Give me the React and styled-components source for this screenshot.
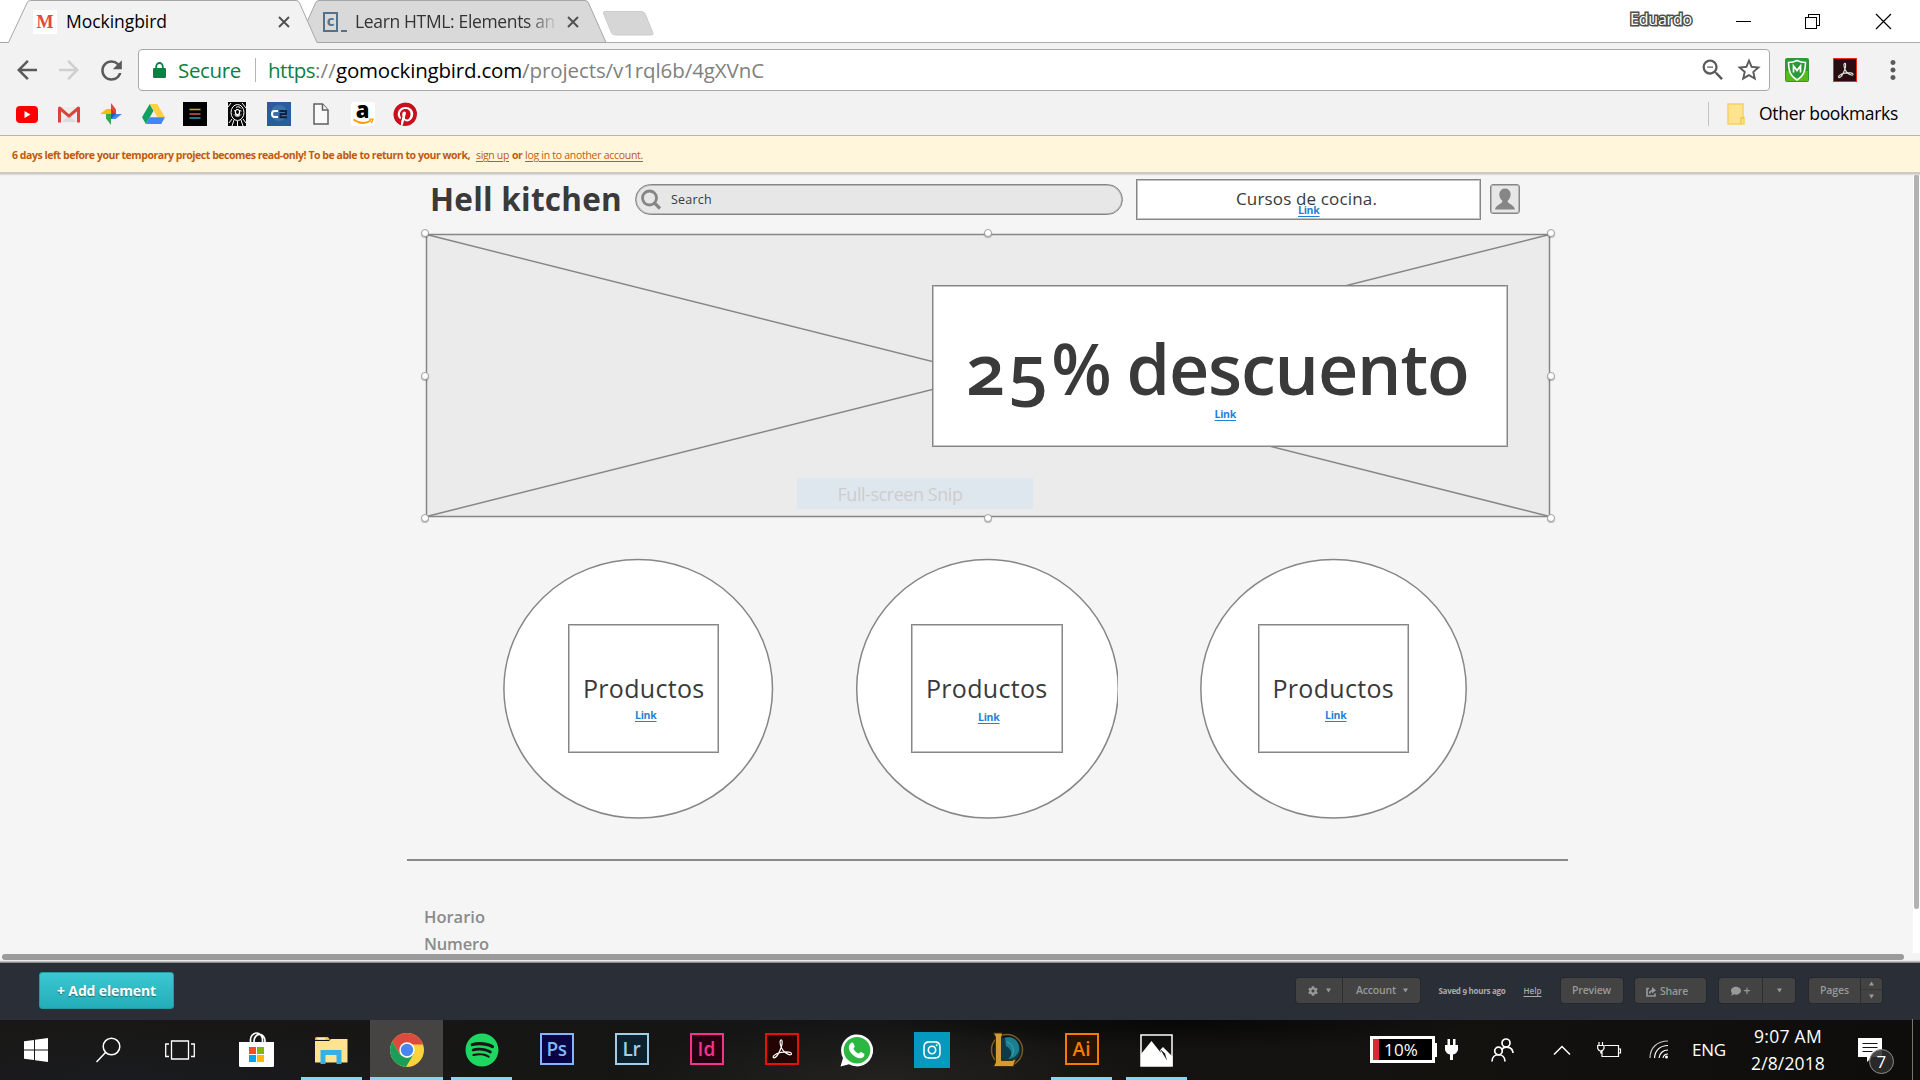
import React, { useLayoutEffect, useRef, useState } from 'react';
import styled, { createGlobalStyle, css } from 'styled-components';
import { MdArrowBack, MdArrowForward, MdRefresh, MdZoomOut, MdStarBorder, MdMoreVert } from 'react-icons/md';
import { FaSpotify, FaPinterest, FaInstagram, FaCog, FaComment } from 'react-icons/fa';

const ui = `'Open Sans', 'Noto Sans', sans-serif`;
const mock = `'Open Sans', 'Noto Sans', sans-serif`;

const Global = createGlobalStyle`
  * { box-sizing: border-box; }
  html, body { margin: 0; padding: 0; overflow: hidden; background: #fff; }
  body { font-family: ${ui}; }
  svg { display: block; flex: none; }
`;

/* ---------- text ---------- */

const Label = styled.span`
  display: inline-block;
  flex: none;
  white-space: pre;
  line-height: 1;
  font-family: ${(p) => p.$font || ui};
  font-size: ${(p) => p.$size}px;
  font-weight: ${(p) => p.$weight || 400};
  color: ${(p) => p.$color || '#000'};
  text-decoration: ${(p) => (p.$underline ? 'underline' : 'none')};
  text-underline-offset: 2px;
  font-variant-numeric: ${(p) => (p.$oldstyle ? 'oldstyle-nums' : 'normal')};
`;

/* Tracks its letters so that the run is exactly `width` wide. */
function Text({ width, children, className, ...rest }) {
  const ref = useRef(null);
  const [spacing, setSpacing] = useState(0);
  useLayoutEffect(() => {
    const natural = ref.current.getBoundingClientRect().width;
    setSpacing((width - natural) / ref.current.textContent.length);
  }, [width]);
  return (
    <Label ref={ref} className={className} style={{ letterSpacing: `${spacing}px` }} {...rest}>
      {children}
    </Label>
  );
}

/* ---------- browser chrome ---------- */

const Screen = styled.div`
  width: 1920px;
  height: 1080px;
  display: flex;
  flex-direction: column;
  overflow: hidden;
  background: #fff;
`;

const TabStrip = styled.header`
  position: relative;
  height: 43px;
  display: flex;
  align-items: center;
  background: #fff;
  flex: none;
`;

const TabShapes = styled.svg`
  position: absolute;
  left: 0;
  top: 0;
`;

const Tab = styled.div`
  position: relative;
  display: flex;
  align-items: center;
  height: 43px;
  width: ${(p) => p.$width}px;
  padding-left: ${(p) => p.$pad}px;
`;

const Favicon = styled.span`
  width: 24px;
  height: 24px;
  margin-right: 9px;
  display: flex;
  align-items: center;
  justify-content: center;
  background: #fff;
  font: 700 18px/1 'Liberation Serif', serif;
  color: #e2483d;
`;

const CodeFavicon = styled.span`
  display: flex;
  align-items: flex-end;
  width: 32px;
  gap: 3px;
`;

const CodeBox = styled.span`
  width: 15px;
  height: 20px;
  border: 2px solid #557089;
  font: 700 15px/13px 'Open Sans', sans-serif;
  text-align: center;
  color: #557089;
`;

const CodeDash = styled.span`
  width: 6px;
  height: 2px;
  background: #557089;
`;

const FadeTitle = styled.div`
  overflow: hidden;
  width: 199px;
  height: 26px;
  display: flex;
  align-items: center;
  mask-image: linear-gradient(90deg, #000 86%, rgba(0, 0, 0, 0.15) 100%);
`;

const TabClose = styled.svg`
  position: relative;
  margin-left: ${(p) => p.$gap}px;
`;

const WindowArea = styled.div`
  margin-left: auto;
  display: flex;
  align-items: center;
  height: 42px;
  position: relative;
`;

const UserName = styled.div`
  margin: -5px 44px 0 0;
  -webkit-text-stroke: 3px #4c4c4c;
  paint-order: stroke fill;
`;

const Toolbar = styled.div`
  height: 54px;
  flex: none;
  display: flex;
  align-items: center;
  padding: 0 0 0 6px;
  background: #f2f2f2;
`;

const Slot = styled.span`
  width: ${(p) => p.$w || 42}px;
  flex: none;
  display: flex;
  align-items: center;
  justify-content: center;
  color: ${(p) => p.$color || '#5a5a5a'};
`;

const Omnibox = styled.div`
  margin: 0 3px 0 6px;
  width: 1632px;
  height: 42px;
  border: 1px solid #a9a9a9;
  border-radius: 4px;
  background: #fff;
  display: flex;
  align-items: center;
  padding-left: 10px;
`;

const OmniDivider = styled.i`
  width: 1px;
  height: 24px;
  margin: 0 12px 0 14px;
  background: #b5b5b5;
`;

const OmniActions = styled.div`
  margin-left: auto;
  display: flex;
  align-items: center;
  gap: 8px;
  padding-right: 6px;
  color: #5a5a5a;
`;

const Bookmarks = styled.div`
  height: 39px;
  flex: none;
  display: flex;
  align-items: center;
  padding: 0 22px 4px 6px;
  background: #f2f2f2;
  border-bottom: 1px solid #b4b4b4;
`;

const OtherBookmarks = styled.div`
  margin-left: auto;
  height: 24px;
  border-left: 1px solid #c3c3c3;
  padding-left: 18px;
  display: flex;
  align-items: center;
  gap: 14px;
`;

const Chip = styled.span`
  width: 24px;
  height: 24px;
  border-radius: ${(p) => p.$radius || 0}px;
  background: ${(p) => p.$bg};
  display: flex;
  align-items: center;
  justify-content: center;
  overflow: hidden;
`;

/* ---------- notice ---------- */

const Notice = styled.div`
  position: relative;
  z-index: 2;
  height: 38px;
  flex: none;
  display: flex;
  align-items: center;
  padding: 2px 0 0 12px;
  background: #fff6db;
  border-bottom: 2px solid #cbcbc3;
  box-shadow: 0 1px 1px #dcdcdc;
`;

const NoticeGap = styled.i`
  width: ${(p) => p.$w}px;
`;

/* ---------- mockup canvas ---------- */

const Workspace = styled.main`
  height: 789px;
  flex: none;
  display: grid;
  grid-template: 779px 10px / 1913px 7px;
  background: #fff;
`;

const Canvas = styled.section`
  position: relative;
  overflow: hidden;
  background: #f5f5f5;
`;

const VTrack = styled.div`
  padding: 0 1px;
`;
const VThumb = styled.div`
  height: 735px;
  border-radius: 3px;
  background: #b2b2b2;
`;
const HTrack = styled.div`
  grid-column: 1 / 3;
  padding: 1px 16px 0 2px;
  background: linear-gradient(#f4f4f4 0 7px, #ececec 7px 8px, #8b908e 9px);
`;
const HThumb = styled.div`
  height: 6px;
  border-radius: 3px;
  background: #9b9b9b;
`;

const place = css`
  position: absolute;
  left: ${(p) => p.$x}px;
  top: ${(p) => p.$y - 174}px;
`;

const Box = styled.div`
  ${place}
  width: ${(p) => p.$w}px;
  height: ${(p) => p.$h}px;
  background: ${(p) => p.$fill || '#fff'};
  border: ${(p) => (p.$bare ? 'none' : '1px solid #868686')};
  box-shadow: ${(p) => (p.$bare ? 'none' : 'inset 0 0 0 1px rgba(134, 134, 134, 0.5)')};
  border-radius: ${(p) => p.$radius || 0}px;
`;

const Shapes = styled.svg`
  position: absolute;
  left: 0;
  top: 0;
`;

const PlacedText = styled.div`
  ${place}
  margin-top: ${(p) => -0.888 * p.$s}px;
  line-height: 1;
  font-size: ${(p) => p.$s}px;
  display: flex;
`;

const Rule = styled.hr`
  ${place}
  width: 1161px;
  height: 2px;
  margin: 0;
  border: 0;
  background: #888;
`;

const Handle = styled.i`
  ${place}
  width: 8px;
  height: 8px;
  margin: -4px 0 0 -4.5px;
  border-radius: 50%;
  background: #fff;
  border: 1px solid #a3a3a3;
  box-shadow: 0 1px 1px rgba(0, 0, 0, 0.25);
`;

function MockText({ x, baseline, width, size, children, ...rest }) {
  return (
    <PlacedText $x={x} $y={baseline} $s={size}>
      <Text width={width} $size={size} $font={mock} $color="#3a3a3a" {...rest}>{children}</Text>
    </PlacedText>
  );
}

function MockLink({ x, baseline }) {
  return (
    <MockText x={x} baseline={baseline} width={21.5} size={10.5} $weight={700} $color="#1f83d8" $underline>Link</MockText>
  );
}

/* ---------- editor bar ---------- */

const EditorBar = styled.footer`
  height: 57px;
  flex: none;
  display: flex;
  align-items: flex-start;
  padding: 9px 38px 0 39px;
  background: #2a2f37;
`;

const AddButton = styled.button`
  width: 135px;
  height: 37px;
  padding: 0;
  border: 1px solid #259aa5;
  border-radius: 3px;
  background: linear-gradient(#3bc8d1, #23adb8);
  display: flex;
  align-items: center;
  justify-content: center;
  text-shadow: 0 1px 1px rgba(0, 0, 0, 0.4);
`;

const EditorTools = styled.div`
  margin: 6px 0 0 auto;
  display: flex;
  align-items: center;
  height: 25px;
`;

const ButtonGroup = styled.div`
  display: flex;
  height: 25px;
  margin-left: ${(p) => p.$gap || 0}px;
  border-radius: 3px;
  background: #434343;
  box-shadow: 0 0 0 1px #25282d;
  overflow: hidden;
`;

const GroupButton = styled.div`
  width: ${(p) => p.$w}px;
  padding-top: ${(p) => p.$drop || 0}px;
  display: flex;
  align-items: center;
  justify-content: center;
  gap: ${(p) => p.$gap || 0}px;
  color: #999;
  & + & { border-left: 1px solid #2b2d30; }
`;

const Stepper = styled.div`
  width: 22px;
  border-left: 1px solid #2b2d30;
  display: grid;
  grid-template-rows: 12px 13px;
  place-items: center;
  & > :first-child { border-bottom: 1px solid #363636; }
`;

const StepCell = styled.span`
  width: 100%;
  height: 100%;
  display: flex;
  align-items: center;
  justify-content: center;
`;

const Saved = styled.div`
  display: flex;
  gap: 18px;
  margin: 0 19px 0 18px;
`;

/* ---------- taskbar ---------- */

const Taskbar = styled.nav`
  height: 60px;
  flex: none;
  display: flex;
  background:
    radial-gradient(ellipse 260px 60px at 880px 60px, #232221, transparent),
    radial-gradient(ellipse 380px 50px at 130px 55px, #1a1b1e, transparent),
    radial-gradient(ellipse 300px 30px at 1180px 0, #070707, transparent),
    linear-gradient(90deg, #191816, #141414 45%, #14120f 75%, #0e0d0b);
`;

const TaskCell = styled.div`
  width: ${(p) => p.$w || 75}px;
  margin-left: ${(p) => p.$gap || 0}px;
  height: 60px;
  display: flex;
  flex-direction: column;
  align-items: center;
`;

const TaskFace = styled.span`
  width: ${(p) => (p.$active ? '73px' : '100%')};
  height: 57px;
  flex: none;
  padding-top: 3px;
  display: flex;
  align-items: center;
  justify-content: center;
  background: ${(p) => (p.$active ? '#454442' : 'transparent')};
`;

const TaskLine = styled.i`
  width: ${(p) => (p.$active ? 73 : 61)}px;
  height: 3px;
  background: #76dcf8;
`;

const AppTile = styled.span`
  width: 34px;
  height: 32px;
  border: 2px solid ${(p) => p.$line};
  background: ${(p) => p.$bg};
  display: flex;
  align-items: center;
  justify-content: center;
  margin-top: -2px;
`;

const SmallTile = styled.span`
  width: 24px;
  height: 24px;
  border: 1px solid #f32a12;
  background: #2a0d10;
  display: flex;
  align-items: center;
  justify-content: center;
`;

const InstaTile = styled.span`
  width: 36px;
  height: 36px;
  background: #0599bf;
  color: #fff;
  display: flex;
  align-items: center;
  justify-content: center;
`;

const Tray = styled.div`
  margin-left: auto;
  display: flex;
  align-items: center;
  width: 550px;
  padding-bottom: 1px;
`;

const Battery = styled.div`
  width: 65px;
  height: 27px;
  border: 3px solid #fff;
  background: linear-gradient(90deg, #d92b35 6px, #000 6px);
  padding-left: 11px;
  display: flex;
  align-items: center;
`;

const BatteryTip = styled.i`
  width: 2px;
  height: 14px;
  background: #fff;
  margin-right: 8px;
`;

const Space = styled.i`
  width: ${(p) => p.$w}px;
  flex: none;
`;

const Clock = styled.div`
  width: 74px;
  display: flex;
  flex-direction: column;
  align-items: center;
  gap: 10px;
  padding-top: 1px;
`;

const ShowDesktop = styled.i`
  width: 8px;
  height: 61px;
  border-left: 1px solid #77766f;
  margin-left: auto;
`;

const Count = styled.div`
  position: relative;
  width: 38px;
  height: 37px;
  margin-top: 14px;
`;

const CountBadge = styled.span`
  position: absolute;
  left: 11px;
  top: 11px;
  width: 25px;
  height: 25px;
  border-radius: 50%;
  border: 1px solid #8c8c8c;
  background: rgba(45, 45, 45, 0.88);
  display: flex;
  align-items: center;
  justify-content: center;
`;

/* ---------- drawings ---------- */

const Close = ({ gap }) => (
  <TabClose $gap={gap} width="12" height="12" viewBox="0 0 12 12" stroke="#505050" strokeWidth="1.9">
    <path d="M1 1 L11 11 M11 1 L1 11" />
  </TabClose>
);

const Down = ({ up }) => (
  <svg width="5" height="5" viewBox="0 0 5 5"><path d={up ? 'M0 4.5H5L2.5 .5Z' : 'M0 .5H5L2.5 4.5Z'} fill="#999" /></svg>
);

const Lock = () => (
  <svg width="13" height="16" viewBox="0 0 13 16"><path d="M3.200 7V4.500a3.300 3.500 0 0 1 6.600 0V7" fill="none" stroke="#0b8043" strokeWidth="1.800" /><rect y="6" width="13" height="10" rx="1.200" fill="#0b8043" /></svg>
);

const AcrobatMark = ({ size, color, weight = 1.5 }) => (
  <svg width={size} height={size} viewBox="0 0 24 24" fill="none" stroke={color} strokeWidth={weight}>
    <path d="M10.600 3.200c1.800-1.200 2.100 2.400.7 6.800C9.700 15 6.400 21 4 20.900 1.500 20.500 4.500 16.500 11 15.400c6-1 10.800-.4 10.500 1.500-.4 2-5.300.5-8.300-3.300C10.600 10.200 9.200 4.500 10.600 3.200Z" />
  </svg>
);

const Youtube = () => (
  <svg width="22" height="17" viewBox="0 0 22 17"><rect width="22" height="17" rx="4" fill="#f00" /><path d="M8.500 5v7l6-3.500z" fill="#fff" /></svg>
);
const Gmail = () => (
  <svg width="22" height="17" viewBox="0 0 22 17">
    <rect x="1" y="1" width="20" height="15.500" rx="1" fill="#ececec" />
    <path d="M4 16 L11 9 18 16Z" fill="#dcdcdc" />
    <path d="M1.500 16.500V2L11 10.200 20.500 2v14.500" fill="none" stroke="#d8453a" strokeWidth="3" strokeLinejoin="round" />
  </svg>
);
const Photos = () => (
  <svg width="22" height="22" viewBox="0 0 22 22">
    <path d="M11 0v11H16V6.500Z" fill="#e2453a" />
    <path d="M22 11H11v5h4.500Z" fill="#4286f4" />
    <path d="M11 22V11H6v4.500Z" fill="#35a853" />
    <path d="M0 11h11V6H6.500Z" fill="#fbbc05" />
    <path d="M11 11V16L16 11Z" fill="#1e5dc4" /><path d="M11 11V6l5 5Z" fill="#b3261e" opacity=".5" />
  </svg>
);
const Drive = () => (
  <svg width="23" height="20" viewBox="0 0 23 20">
    <path d="M7.700 0 0 13.300 3.800 20 11.600 6.700Z" fill="#11a15e" />
    <path d="M7.700 0h7.600L23 13.300h-7.600Z" fill="#ffcf44" />
    <path d="M7.600 13.300H23L19.200 20H3.800Z" fill="#4285f4" />
  </svg>
);
const Stripes = () => (
  <svg width="24" height="24"><rect width="24" height="24" fill="#000" /><path d="M6.500 7.500h11" stroke="#b6a82c" strokeWidth="1.600" /><path d="M6.500 12h11" stroke="#c94f4a" strokeWidth="1.600" /><path d="M6.500 16h11" stroke="#1d96ad" strokeWidth="1.600" /></svg>
);
const Print = () => (
  <svg width="24" height="24" viewBox="-1 0 24 24">
    <rect x="2" width="18" height="24" fill="#080808" />
    <g fill="none" stroke="#fff" strokeWidth="1">
      <ellipse cx="11.500" cy="10.500" rx="6.500" ry="8" /><path d="M8 9l3-1M12.500 8.500l3 .5M8 12.500c2 2.500 5 2.500 7 0M10 5.500c2-1.500 4-.5 5 1" />
      <path d="M8 18l-2 6M11.500 19v5M15 18l2 6M2 5l3-4M20 6l-4-5M3 21l3-4M20 21l-3-4" />
    </g>
    <ellipse cx="11.500" cy="10.500" rx="2.600" ry="3.500" fill="#fff" /><ellipse cx="11.500" cy="10" rx="1.500" ry="2" fill="#000" />
  </svg>
);
const C2 = () => (
  <svg width="24" height="24" viewBox="0 0 24 24">
    <rect width="24" height="24" fill="#2a5d9c" /><circle cx="12" cy="11" r="8" fill="#4d7db5" opacity=".6" />
    <path d="M11 9H7.500Q5 9 5 12t2.500 3H11" fill="none" stroke="#fff" strokeWidth="2" />
    <path d="M12.500 9h6.500v3h-5.500v3.200H20" fill="none" stroke="#15233a" strokeWidth="2" />
  </svg>
);
const Page = () => (
  <svg width="16" height="22" viewBox="0 0 16 22" fill="#fafafa" stroke="#5f5f5f" strokeWidth="1.500"><path d="M1 1h8.500L15 7v14H1z" /><path d="M9.500 1v6H15" /></svg>
);
const Folder = () => (
  <svg width="18" height="22" viewBox="0 0 18 22"><path d="M1 1h15v13.500h1V21H1z" fill="#ffe38f" stroke="#f7d25e" strokeWidth="1.500" /><path d="M14 21v-6h2.500" fill="none" stroke="#edc546" strokeWidth="1.300" /></svg>
);
const AmazonMark = () => (
  <svg width="24" height="24" viewBox="0 0 24 24">
    <rect width="24" height="24" rx="3" fill="#fff" />
    <text x="11.700" y="15.500" textAnchor="middle" fontFamily="Open Sans, sans-serif" fontWeight="800" fontSize="22">a</text>
    <path d="M2.500 17.500q9 6.500 17.500 1" fill="none" stroke="#f90" strokeWidth="1.800" /><path d="M18 17.200h4l-1.500 3.800" fill="none" stroke="#f90" strokeWidth="1.300" />
  </svg>
);
const Shield = () => (
  <svg width="24" height="24" viewBox="0 0 24 24">
    <rect width="24" height="24" rx="2" fill="#2f9a33" /><path d="M1 13h22v10H1z" fill="#57b81e" />
    <path d="M12 2.500c3 1.500 5.500 2 8.500 2-.2 8-1.500 13.500-8.500 17.500C5 18 3.700 12.500 3.500 4.500c3 0 5.500-.5 8.500-2Z" fill="#2b9a3b" stroke="#fff" strokeWidth="1.500" />
    <path d="M8.500 14.500V8l3.500 4.500L15.500 8v6.500" fill="none" stroke="#fff" strokeWidth="1.700" />
  </svg>
);
const WindowButtons = () => (
  <svg width="184" height="30" viewBox="0 0 184 30" fill="none" stroke="#000" strokeWidth="1">
    <path d="M0 14.500h15M69.500 10.500h11v11h-11zM72.500 10V7.500h11v11H81" shapeRendering="crispEdges" />
    <path d="M140 7l15 15M155 7l-15 15" strokeWidth="1.200" />
  </svg>
);

const WindowsLogo = () => (
  <svg width="24" height="24" viewBox="0 0 24 24" fill="#fff"><path d="M0 3.300 10 2v9.500H0zM11 1.800 24 0v11.500H11zM0 12.500h10V22L0 20.700zM11 12.500h13V24l-13-1.800z" /></svg>
);
const SearchGlass = () => (
  <svg width="26" height="26" viewBox="0 0 26 26" fill="none" stroke="#fff" strokeWidth="1.500"><circle cx="16.500" cy="9.500" r="8.300" /><path d="M10.500 15.500 1.500 25" /></svg>
);
const TaskView = () => (
  <svg width="30" height="20" viewBox="0 0 30 20" fill="none" stroke="#fff" strokeWidth="1.300"><path d="M6.500 1h17v18h-17zM4 4H.700v12.500H4M26 4h3.300v12.500H26" /></svg>
);
const Store = () => (
  <svg width="35" height="36" viewBox="0 0 35 36">
    <path d="M11.500 11V8a6 7 0 0 1 12 0v3M15 11V9a5 6 0 0 1 11 0v2" fill="none" stroke="#fff" strokeWidth="1.700" />
    <path d="M0 10h35v23.500q0 1.500-1.500 1.500h-32Q0 35 0 33.500z" fill="#fff" />
    <path d="M10 15h7v7h-7z" fill="#f25022" /><path d="M18 15h7v7h-7z" fill="#7fba00" /><path d="M10 23h7v7h-7z" fill="#00a4ef" /><path d="M18 23h7v7h-7z" fill="#ffb900" />
  </svg>
);
const Explorer = () => (
  <svg width="33" height="27" viewBox="0 0 33 27">
    <path d="M0 1.500Q0 0 1.500 0H13l2 3H0z" fill="#f5bf2c" /><path d="M2.500 1.800h8" stroke="#fff" strokeWidth="1.200" />
    <path d="M0 4h14l2-2h16.500v23.500H0z" fill="#ffe38e" />
    <path d="M5.500 13h21v14h-5v-9h-11v9h-5z" fill="#36b1e6" />
  </svg>
);
const Chrome = () => (
  <svg width="34" height="34" viewBox="0 0 34 34">
    <circle cx="17" cy="17" r="17" fill="#fdd23c" />
    <path d="M2.300 8.500A17 17 0 0 1 31.700 8.500L33 11.500H17L9.500 21Z" fill="#dc4b3e" />
    <path d="M2.300 8.500A17 17 0 0 0 16 34L24 20.500 17 25 9.500 21Z" fill="#1a9f5b" />
    <circle cx="17" cy="17" r="7.700" fill="#fff" /><circle cx="17" cy="17" r="6.200" fill="#4887f2" />
  </svg>
);
const WhatsApp = () => (
  <svg width="33" height="33" viewBox="0 0 33 33">
    <path d="M.500 32.500 3 24A16 16 0 1 1 9 30.200Z" fill="#fff" /><circle cx="17" cy="16.200" r="13.300" fill="#2cb742" />
    <path d="M10.500 9.500c1.500-1.500 2.500-1 3.200.5l1 2.300c.3.900-1.300 1.900-1.200 2.500.8 2 2.700 3.900 5 4.800.7.200 1.600-1.700 2.400-1.500l3.300 1.700c.7.500-.2 3-1.300 3.700-3.200 2-8.300-.5-11-3.500-2.800-3-4.500-7.200-1.400-10.500Z" fill="#fff" />
  </svg>
);
const League = () => (
  <svg width="34" height="36" viewBox="0 0 34 36">
    <circle cx="17" cy="18" r="15.500" fill="none" stroke="#7a5c24" strokeWidth="1.500" /><circle cx="17.500" cy="18" r="13" fill="#0d3b49" />
    <path d="M15 6c9-3 15 4 14 13-2 5-6 8-11 8 6-5 3-10-2-13Z" fill="#1a7f8e" /><path d="M17 10c6 2 8 8 5 14" stroke="#3ea8ae" fill="none" />
    <path d="M3.500 1h8.500l.5 2-1 2v23.500h10.500l4-2-2.500 8H3.500l2-4V5z" fill="#d39b34" stroke="#3b2b0c" />
  </svg>
);
const PhotoApp = () => (
  <svg width="33" height="33" viewBox="0 0 33 33"><path d="M1 1h31v31H1z" fill="none" stroke="#fff" strokeWidth="1.500" /><path d="M1 20 11.500 7 21 19l-1-3 3-3 9.500 9.500V32H1z" fill="#fff" /><path d="M20 15l7 11.500-2-7Z" fill="#111" /></svg>
);
const Plug = () => (
  <svg width="13" height="21" viewBox="0 0 13 21" fill="#fff"><path d="M2.500 0h2.500v6H8V0h2.500v6H13v5q-1.500 4-5 4.500V21H5v-5.500Q1.500 15 0 11V6h2.500z" /></svg>
);
const People = () => (
  <svg width="23" height="24" viewBox="0 0 23 24" fill="none" stroke="#fff" strokeWidth="1.700"><circle cx="7.500" cy="13" r="3.800" /><path d="M1 23.500c0-9 13-9 13 0" /><circle cx="15" cy="5" r="4" /><path d="M10.500 12c3-4.500 11-3.500 11.500 3" /></svg>
);
const Chevron = () => (
  <svg width="18" height="10" viewBox="0 0 18 10" fill="none" stroke="#fff" strokeWidth="1.500"><path d="M1 9.500 9 1.500l8 8" /></svg>
);
const BatteryPlug = () => (
  <svg width="25" height="16" viewBox="0 0 25 16" fill="none" stroke="#fff" strokeWidth="1.200"><path d="M8 3.500h13.500v11H5V9M22 7h1.500v4H22M2 0v3M5.500 0v3M.700 3.500H7v3Q6 9 3.800 9T.700 6.500zM3.800 9v2.500" /></svg>
);
const Wifi = () => (
  <svg width="20" height="19" viewBox="0 0 20 19" fill="none" stroke="#fff" strokeWidth="1.200"><path d="M1 18C1 8 8 1 19 1" opacity=".75" /><path d="M5.500 18C6 10.500 11 5.500 19 5.500M10 18c.5-4.500 4-8 9-8M14 18c.5-2.500 2-4 5-4" /><circle cx="17.500" cy="17" r="1.500" fill="#fff" stroke="none" /></svg>
);
const ShareMark = () => (
  <svg width="10" height="10" viewBox="0 0 10 10" fill="none" stroke="#999" strokeWidth="1.700"><path d="M3 1.500H1v7.500h8V6.500M3.500 6.500Q4 3.500 7 3.500" /><path d="M6 0 10 3.300 6 6.600z" fill="#999" stroke="none" /></svg>
);

/* ---------- sections ---------- */

function BrowserTabs() {
  return (
    <TabStrip>
      <TabShapes width="1920" height="43" viewBox="0 0 1920 43">
        <path d="M0 42.500H1920" stroke="#ababab" />
        <path d="M307 22 315.500 3Q316.500.500 319 .500H585Q587.500.500 588.500 3L606 42.500H316Z" fill="#d9d9d9" stroke="#a6a6a6" />
        <path d="M0 42.500H8.500L27 3Q28 .500 30.500 .500H296Q298.500.500 299.500 3L317 42.500V43H8Z" fill="#f2f2f2" />
        <path d="M0 42.500H8.500L27 3Q28 .500 30.500 .500H296Q298.500.500 299.500 3L317 42.500" fill="none" stroke="#a6a6a6" />
        <path d="M605 11.500H641Q644 11.500 645 13.500L653 33Q653.500 35 651 35H616Q612.500 35 611.500 33L603.500 13.500Q603 11.500 605 11.500Z" fill="#d6d6d6" stroke="#c4c4c4" strokeWidth=".8" />
      </TabShapes>
      <Tab $width={314} $pad={33}>
        <Favicon>M</Favicon>
        <Text width={101} $size={17.500}>Mockingbird</Text>
        <Close gap={111} />
      </Tab>
      <Tab $width={296} $pad={9}>
        <CodeFavicon><CodeBox>c</CodeBox><CodeDash /></CodeFavicon>
        <FadeTitle><Text width={200} $size={17.500} $color="#333">Learn HTML: Elements an</Text></FadeTitle>
        <Close gap={13} />
      </Tab>
      <WindowArea>
        <UserName><Text width={62} $size={16} $weight={500} $color="#fff">Eduardo</Text></UserName>
        <WindowButtons />
      </WindowArea>
    </TabStrip>
  );
}

function BrowserToolbar() {
  return (
    <Toolbar>
      <Slot><MdArrowBack size={30} /></Slot>
      <Slot $color="#cfcfcf"><MdArrowForward size={30} /></Slot>
      <Slot><MdRefresh size={31} /></Slot>
      <Omnibox>
        <Slot $w={20}><Lock /></Slot>
        <Space $w={9} />
        <Text width={63} $size={20.500} $color="#0b8043">Secure</Text>
        <OmniDivider />
        <Text width={47} $size={20.500} $color="#0b8043">https</Text>
        <Text width={21} $size={20.500} $color="#808080">://</Text>
        <Text width={186} $size={20.500}>gomockingbird.com</Text>
        <Text width={242} $size={20.500} $color="#808080">/projects/v1rql6b/4gXVnC</Text>
        <OmniActions><MdZoomOut size={28} /><MdStarBorder size={28} /></OmniActions>
      </Omnibox>
      <Slot $w={48}><Shield /></Slot>
      <Slot $w={48}><SmallTile><AcrobatMark size={19} color="#ddd" /></SmallTile></Slot>
      <Slot $w={48}><MdMoreVert size={30} /></Slot>
    </Toolbar>
  );
}

function BookmarkBar() {
  const items = [Youtube, Gmail, Photos, Drive, Stripes, Print, C2, Page, AmazonMark];
  return (
    <Bookmarks>
      {items.map((Icon, i) => <Slot key={i}><Icon /></Slot>)}
      <Slot $color="#c8101e"><Chip $bg="#fff" $radius={12}><FaPinterest size={25} /></Chip></Slot>
      <OtherBookmarks>
        <Folder />
        <Text width={139} $size={17.500}>Other bookmarks</Text>
      </OtherBookmarks>
    </Bookmarks>
  );
}

function ReadOnlyNotice() {
  const c = '#c15a12';
  return (
    <Notice>
      <Text width={458} $size={10.500} $weight={700} $color={c}>6 days left before your temporary project becomes read-only! To be able to return to your work,</Text>
      <NoticeGap $w={6} />
      <Text width={33} $size={10.500} $color={c} $underline>sign up</Text>
      <NoticeGap $w={3} />
      <Text width={10} $size={10.500} $weight={700} $color={c}>or</Text>
      <NoticeGap $w={3} />
      <Text width={118} $size={10.500} $color={c} $underline>log in to another account.</Text>
    </Notice>
  );
}

const products = [
  { box: 568, w: 151, text: 584, link: 635, base: 719 },
  { box: 911, w: 152, text: 927, link: 978, base: 721 },
  { box: 1258, w: 151, text: 1273.5, link: 1325, base: 719 },
];

const handles = [[425, 233], [988, 233], [1551, 233], [425, 375.5], [1551, 375.5], [425, 518], [988, 518], [1551, 518]];

function MockCanvas() {
  return (
    <Canvas>
      <MockText x={430} baseline={211} width={192} size={31.500} $weight={700}>Hell kitchen</MockText>
      <Box $x={635} $y={184} $w={488} $h={31} $radius={16} $fill="#e7e7e7" />
      <Box $x={1136} $y={179} $w={345} $h={41} />
      <Box $x={1490} $y={184} $w={30} $h={30} $radius={3} $fill="#e7e7e7" />
      <Shapes width="1913" height="779" viewBox="0 174 1913 779" fill="none" stroke="#868686" strokeWidth="1.500">
        <defs><clipPath id="cut"><rect x="850" y="550" width="268" height="280" /></clipPath></defs>
        <circle cx="649.500" cy="198" r="7" strokeWidth="2.800" />
        <path d="M654.500 203 660 208.500" strokeWidth="3.200" />
        <path d="M1495 209.500c1-5 7-5.500 7.500-8.500-5-4-4-12.500 2.500-12.500s7.500 8.500 2.500 12.500c.5 3 6.500 3.500 7.500 8.500z" fill="#868686" stroke="none" />
        <rect x="426.500" y="234.500" width="1123" height="282" fill="#ebebeb" />
        <path d="M426.500 234.500 1549.500 516.500M426.500 516.500 1549.500 234.500" />
        <ellipse cx="638.200" cy="688.800" rx="134.300" ry="129.200" fill="#fff" />
        <ellipse cx="987.500" cy="688.800" rx="130.800" ry="129.200" fill="#fff" clipPath="url(#cut)" />
        <ellipse cx="1333.500" cy="688.800" rx="132.700" ry="129.200" fill="#fff" />
      </Shapes>
      <MockText x={671} baseline={204.800} width={41} size={12.500} $weight={500}>Search</MockText>
      <MockText x={1236} baseline={205} width={141} size={17} $weight={500}>Cursos de cocina.</MockText>
      <MockLink x={1298} baseline={214.500} />
      {handles.map(([x, y]) => <Handle key={`${x}-${y}`} $x={x} $y={y} />)}
      <Box $x={932} $y={285} $w={576} $h={162} />
      <MockText x={966} baseline={395} width={149} size={70} $weight={600} $oldstyle>25%</MockText>
      <MockText x={1126.500} baseline={395} width={342} size={70} $weight={600}>descuento</MockText>
      <MockLink x={1214.500} baseline={418} />
      <Box $x={797} $y={478} $w={236} $h={31} $fill="#dfe7ee" $bare />
      <MockText x={837.500} baseline={501} width={125} size={18} $color="#cdcdcd">Full-screen Snip</MockText>
      {products.map((p) => (
        <React.Fragment key={p.box}>
          <Box $x={p.box} $y={624} $w={p.w} $h={129} />
          <MockText x={p.text - 1} baseline={698} width={121.500} size={25} $weight={500}>Productos</MockText>
          <MockLink x={p.link} baseline={p.base} />
        </React.Fragment>
      ))}
      <Rule $x={407} $y={859} />
      <MockText x={424} baseline={924} width={61} size={16.500} $weight={600} $color="#8b8b8b">Horario</MockText>
      <MockText x={424} baseline={951} width={65} size={16.500} $weight={600} $color="#8b8b8b">Numero</MockText>
    </Canvas>
  );
}

const small = { $size: 10.5, $color: '#999', $weight: 600 };

function EditorFooter() {
  return (
    <EditorBar>
      <AddButton><Text width={99} $size={14} $weight={700} $color="#fff">+ Add element</Text></AddButton>
      <EditorTools>
        <ButtonGroup>
          <GroupButton $w={46.500} $gap={8}><FaCog size={10} /><Down /></GroupButton>
          <GroupButton $w={78} $gap={7}><Text width={40} {...small}>Account</Text><Down /></GroupButton>
        </ButtonGroup>
        <Saved>
          <Text width={67} $size={8} $weight={700} $color="#aaa" $oldstyle>Saved 9 hours ago</Text>
          <Text width={18} $size={8} $weight={600} $color="#aaa" $underline>Help</Text>
        </Saved>
        <ButtonGroup><GroupButton $w={62}><Text width={39} {...small}>Preview</Text></GroupButton></ButtonGroup>
        <ButtonGroup $gap={12.500}><GroupButton $w={71} $gap={4} $drop={2}><ShareMark /><Text width={28} {...small}>Share</Text><Space $w={3} /></GroupButton></ButtonGroup>
        <ButtonGroup $gap={13}>
          <GroupButton $w={43} $gap={3}><FaComment size={10} /><Text width={7} $size={12} $weight={600} $color="#999">+</Text></GroupButton>
          <GroupButton $w={33}><Down /></GroupButton>
        </ButtonGroup>
        <ButtonGroup $gap={14}>
          <GroupButton $w={51}><Text width={29} {...small}>Pages</Text></GroupButton>
          <Stepper><StepCell><Down up /></StepCell><StepCell><Down /></StepCell></Stepper>
        </ButtonGroup>
      </EditorTools>
    </EditorBar>
  );
}

const Adobe = ({ code, line, bg }) => (
  <AppTile $line={line} $bg={bg}><Text width={code === 'Ps' ? 20 : 18} $size={19} $weight={600} $color={line}>{code}</Text></AppTile>
);

function WindowsTaskbar() {
  const system = [WindowsLogo, SearchGlass, TaskView];
  const apps = [
    { icon: <Store /> },
    { icon: <Explorer />, open: true },
    { icon: <Chrome />, open: true, active: true },
    { icon: <FaSpotify size={34} color="#1ed760" />, open: true },
    { icon: <Adobe code="Ps" line="#7fb8f5" bg="#0a0345" /> },
    { icon: <Adobe code="Lr" line="#a5cde6" bg="#0b222e" /> },
    { icon: <Adobe code="Id" line="#f5338c" bg="#26000f" /> },
    { icon: <AppTile $line="#e3120b" $bg="#240302"><AcrobatMark size={24} color="#fff" weight={1.2} /></AppTile> },
    { icon: <WhatsApp /> },
    { icon: <InstaTile><FaInstagram size={20} /></InstaTile> },
    { icon: <League /> },
    { icon: <Adobe code="Ai" line="#f57c00" bg="#271301" />, open: true },
    { icon: <PhotoApp />, open: true },
  ];
  return (
    <Taskbar>
      {system.map((Icon, i) => <TaskCell key={i} $w={72}><TaskFace><Icon /></TaskFace></TaskCell>)}
      {apps.map((a, i) => (
        <TaskCell key={i} $gap={i === 0 ? 3 : 0}>
          <TaskFace $active={a.active}>{a.icon}</TaskFace>
          {a.open && <TaskLine $active={a.active} />}
        </TaskCell>
      ))}
      <Tray>
        <Battery><Text width={34} $size={17} $color="#fff">10%</Text></Battery><BatteryTip />
        <Plug /><Space $w={33} />
        <People /><Space $w={39} />
        <Chevron /><Space $w={26} />
        <BatteryPlug /><Space $w={27} />
        <Wifi /><Space $w={23} />
        <Text width={34} $size={17} $color="#fff">ENG</Text><Space $w={25} />
        <Clock>
          <Text width={68} $size={17.500} $color="#fff">9:07 AM</Text>
          <Text width={74} $size={17.500} $color="#fff">2/8/2018</Text>
        </Clock>
        <Space $w={33} />
        <Count>
          <svg width="25" height="27" viewBox="0 0 25 27"><path d="M0 0h24v19H14l-5 5v-5H0z" fill="#fff" /><path d="M4.500 5.500h15M4.500 9.500h15M4.500 13.500h10" stroke="#151515" strokeWidth="1.200" /></svg>
          <CountBadge><Text width={10} $size={17} $color="#fff">7</Text></CountBadge>
        </Count>
        <ShowDesktop />
      </Tray>
    </Taskbar>
  );
}

export default function App() {
  return (
    <Screen>
      <Global />
      <BrowserTabs />
      <BrowserToolbar />
      <BookmarkBar />
      <ReadOnlyNotice />
      <Workspace>
        <MockCanvas />
        <VTrack><VThumb /></VTrack>
        <HTrack><HThumb /></HTrack>
      </Workspace>
      <EditorFooter />
      <WindowsTaskbar />
    </Screen>
  );
}
